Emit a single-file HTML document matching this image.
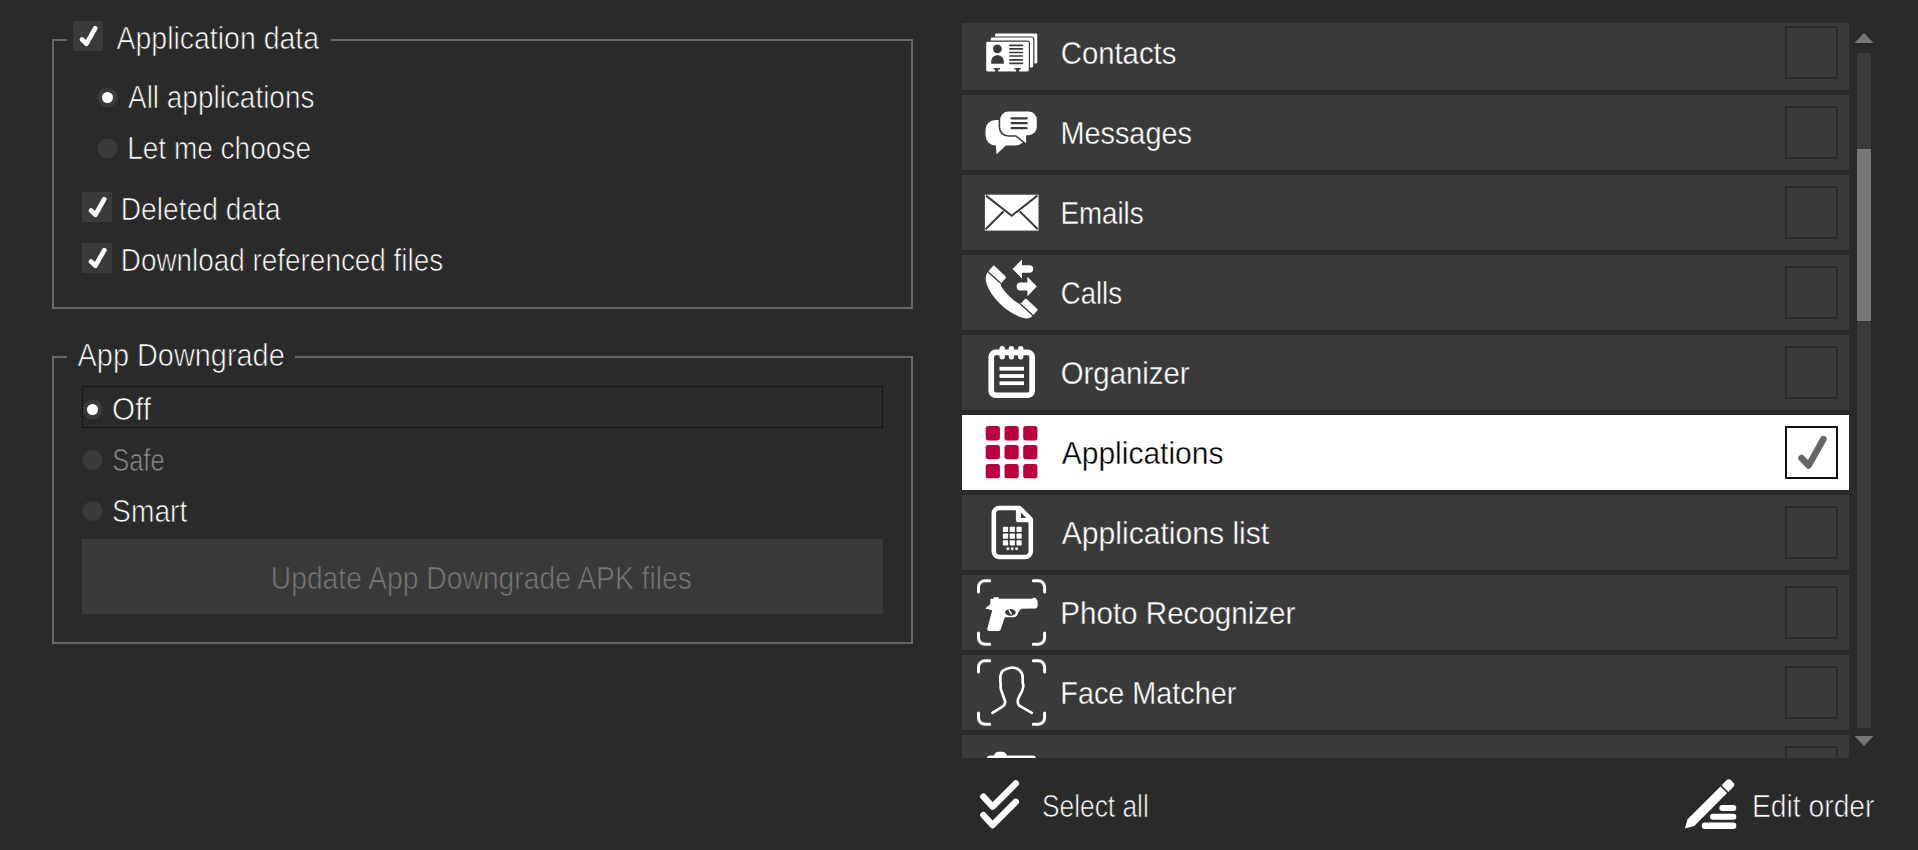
<!DOCTYPE html>
<html><head><meta charset="utf-8"><style>
html,body{margin:0;padding:0;background:#2a2a2a;width:1918px;height:850px;overflow:hidden}
svg{display:block}
text{font-family:'Liberation Sans', sans-serif;white-space:pre}
</style></head><body>
<svg width="1918" height="850" viewBox="0 0 1918 850"><rect x="0" y="0" width="1918" height="850" fill="#2a2a2a"/><path d="M67,40 H53 V308 H912 V40 H331" fill="none" stroke="#666666" stroke-width="2"/><path d="M67,357 H53 V643 H912 V357 H295" fill="none" stroke="#666666" stroke-width="2"/><rect x="73" y="21" width="30" height="30" fill="#3a3a3a"/><path d="M82,39.5 L86.5,43.7 L95.3,28.2" fill="none" stroke="#fff" stroke-width="4.7" stroke-linecap="round" stroke-linejoin="round"/><circle cx="107.5" cy="97.5" r="10" fill="#3a3a3a"/><circle cx="107.5" cy="97.5" r="5.5" fill="#fff"/><circle cx="107.5" cy="148.5" r="10" fill="#3a3a3a"/><rect x="82" y="192" width="30" height="30" fill="#3a3a3a"/><path d="M91,210.5 L95.5,214.7 L104.3,199.2" fill="none" stroke="#fff" stroke-width="4.7" stroke-linecap="round" stroke-linejoin="round"/><rect x="82" y="243" width="30" height="30" fill="#3a3a3a"/><path d="M91,261.5 L95.5,265.7 L104.3,250.2" fill="none" stroke="#fff" stroke-width="4.7" stroke-linecap="round" stroke-linejoin="round"/><circle cx="92.5" cy="409.5" r="10" fill="#3a3a3a"/><circle cx="92.5" cy="409.5" r="5.5" fill="#fff"/><circle cx="92.5" cy="460" r="10" fill="#3a3a3a"/><circle cx="92.5" cy="511" r="10" fill="#3a3a3a"/><rect x="82.5" y="386.5" width="800" height="41" fill="none" stroke="#000" stroke-width="1" stroke-dasharray="1 1" shape-rendering="crispEdges"/><rect x="82" y="539" width="801" height="75" fill="#3a3a3a"/><defs><clipPath id="lv"><rect x="962" y="23" width="887" height="735"/></clipPath></defs><g clip-path="url(#lv)"><rect x="962" y="15" width="887" height="75" fill="#3a3a3a"/><rect x="1786" y="27" width="51" height="51" fill="#3a3a3a" stroke="#2a2a2a" stroke-width="2"/><rect x="962" y="95" width="887" height="75" fill="#3a3a3a"/><rect x="1786" y="107" width="51" height="51" fill="#3a3a3a" stroke="#2a2a2a" stroke-width="2"/><rect x="962" y="175" width="887" height="75" fill="#3a3a3a"/><rect x="1786" y="187" width="51" height="51" fill="#3a3a3a" stroke="#2a2a2a" stroke-width="2"/><rect x="962" y="255" width="887" height="75" fill="#3a3a3a"/><rect x="1786" y="267" width="51" height="51" fill="#3a3a3a" stroke="#2a2a2a" stroke-width="2"/><rect x="962" y="335" width="887" height="75" fill="#3a3a3a"/><rect x="1786" y="347" width="51" height="51" fill="#3a3a3a" stroke="#2a2a2a" stroke-width="2"/><rect x="962" y="415" width="887" height="75" fill="#ffffff"/><rect x="1786" y="427" width="51" height="51" fill="#fff" stroke="#111" stroke-width="2"/><path d="M1801.5,458 L1808.6,465.5 L1823.4,439.1" fill="none" stroke="#666" stroke-width="6.5" stroke-linecap="round" stroke-linejoin="round"/><rect x="962" y="495" width="887" height="75" fill="#3a3a3a"/><rect x="1786" y="507" width="51" height="51" fill="#3a3a3a" stroke="#2a2a2a" stroke-width="2"/><rect x="962" y="575" width="887" height="75" fill="#3a3a3a"/><rect x="1786" y="587" width="51" height="51" fill="#3a3a3a" stroke="#2a2a2a" stroke-width="2"/><rect x="962" y="655" width="887" height="75" fill="#3a3a3a"/><rect x="1786" y="667" width="51" height="51" fill="#3a3a3a" stroke="#2a2a2a" stroke-width="2"/><rect x="962" y="735" width="887" height="75" fill="#3a3a3a"/><rect x="1786" y="747" width="51" height="51" fill="#3a3a3a" stroke="#2a2a2a" stroke-width="2"/></g><path d="M1854.5,43 L1873.5,43 L1864,33 Z" fill="#777"/><rect x="1857" y="53" width="14" height="675" fill="#3a3a3a"/><rect x="1857" y="149" width="14" height="172" fill="#777"/><path d="M1854.5,736 L1873.5,736 L1864,746 Z" fill="#777"/><rect x="994.4" y="32.9" width="43.500000000000114" height="31.199999999999996" rx="2" fill="#ffffff" stroke="#3a3a3a" stroke-width="1.2"/><rect x="990" y="37" width="43.799999999999955" height="31" rx="2" fill="#ffffff" stroke="#3a3a3a" stroke-width="1.2"/><rect x="985.6" y="41.2" width="43.80000000000007" height="30.799999999999997" rx="2" fill="#ffffff" stroke="#3a3a3a" stroke-width="1.2"/><circle cx="997.4" cy="48.8" r="4.4" fill="#3a3a3a"/><path d="M991.2,63.8 L991.2,61.5 C991.2,57.8 994,55.3 997.5,55.3 C1001,55.3 1003.8,57.8 1003.8,61.5 L1003.8,63.8 Z" fill="#3a3a3a"/><line x1="1009.9" y1="45.4" x2="1022.4" y2="45.4" stroke="#3a3a3a" stroke-width="1.7" stroke-linecap="round"/><line x1="1009.9" y1="48.9" x2="1022.4" y2="48.9" stroke="#3a3a3a" stroke-width="1.7" stroke-linecap="round"/><line x1="1009.9" y1="52.5" x2="1022.4" y2="52.5" stroke="#3a3a3a" stroke-width="1.7" stroke-linecap="round"/><line x1="1009.9" y1="56" x2="1022.4" y2="56" stroke="#3a3a3a" stroke-width="1.7" stroke-linecap="round"/><line x1="1009.9" y1="59.8" x2="1022.4" y2="59.8" stroke="#3a3a3a" stroke-width="1.7" stroke-linecap="round"/><line x1="1009.9" y1="63.4" x2="1022.4" y2="63.4" stroke="#3a3a3a" stroke-width="1.7" stroke-linecap="round"/><path d="M993.5,68 H1000.0 V69.6 H998.3 V72.5 H995.2 V69.6 H993.5 Z" fill="#3a3a3a"/><path d="M1014.4,68 H1020.9 V69.6 H1019.1999999999999 V72.5 H1016.1 V69.6 H1014.4 Z" fill="#3a3a3a"/><rect x="985.5" y="119.9" width="40" height="25.5" rx="10" fill="#ffffff"/><path d="M995.8,144 L996.5,154.2 L1007.5,144 Z" fill="#ffffff"/><path d="M1008.4,110.8 H1028.6 A9,9 0 0 1 1037.6,119.8 V127 A9,9 0 0 1 1028.6,136 H1026.9 V144.8 L1015.9,136 H1008.4 A9,9 0 0 1 999.4,127 V119.8 A9,9 0 0 1 1008.4,110.8 Z" fill="#ffffff" stroke="#3a3a3a" stroke-width="1.6"/><line x1="1011.6" y1="118.3" x2="1026.7" y2="118.3" stroke="#3a3a3a" stroke-width="2.3" stroke-linecap="round"/><line x1="1011.6" y1="123.2" x2="1026.7" y2="123.2" stroke="#3a3a3a" stroke-width="2.3" stroke-linecap="round"/><line x1="1011.6" y1="128.2" x2="1026.7" y2="128.2" stroke="#3a3a3a" stroke-width="2.3" stroke-linecap="round"/><rect x="984.9" y="194.7" width="53.6" height="35.9" fill="#ffffff"/><path d="M986,195.6 L1011.7,215.8 L1037.4,195.6" fill="none" stroke="#3a3a3a" stroke-width="2"/><path d="M985.6,229.2 L1003.6,211.2 M1037.8,229.2 L1019.8,211.4" fill="none" stroke="#3a3a3a" stroke-width="2"/><path d="M993.2,265.8 Q994,265.3 994.7,266 L1005.6,276.6 Q1006.3,277.4 1005.6,278.2 L1001.8,282.6 Q1000.6,284.2 1000.9,286 C1004.5,291.5 1010.5,298.5 1018.5,303.6 Q1020.3,304.2 1021.6,302.8 L1025,299 Q1025.8,298.3 1026.6,299 L1037.3,308.9 Q1038,309.7 1037.3,310.5 L1033.5,314.8 C1031.5,317.5 1028.8,318.7 1025.8,318.5 C1009,315 993,300 987,285 C985.3,281 985.2,276.5 987.3,272.5 Z" fill="#ffffff"/><path d="M987.3,271.2 L1001.3,283.8 M1020.2,303.8 L1033.2,315.7" stroke="#3a3a3a" stroke-width="1.5"/><path d="M1012.5,269 L1022,259.5 V265.3 H1029.5 A3.7,3.7 0 0 1 1029.5,272.7 H1022 V278.5 Z" fill="#ffffff"/><path d="M1036.8,286.5 L1027.4,276.8 V282.6 H1020.5 A3.9,3.9 0 0 0 1020.5,290.4 H1027.4 V296.2 Z" fill="#ffffff"/><rect x="991.25" y="352.45" width="40.9" height="42.8" rx="4.5" fill="none" stroke="#ffffff" stroke-width="5.7"/><line x1="1002.2" y1="348.8" x2="1002.2" y2="356.8" stroke="#ffffff" stroke-width="5.4" stroke-linecap="round"/><line x1="1011.35" y1="348.8" x2="1011.35" y2="356.8" stroke="#ffffff" stroke-width="5.4" stroke-linecap="round"/><line x1="1020.75" y1="348.8" x2="1020.75" y2="356.8" stroke="#ffffff" stroke-width="5.4" stroke-linecap="round"/><line x1="999.5" y1="368.7" x2="1024" y2="368.7" stroke="#ffffff" stroke-width="3.8"/><line x1="999.5" y1="376" x2="1024" y2="376" stroke="#ffffff" stroke-width="3.8"/><line x1="999.5" y1="383.2" x2="1024" y2="383.2" stroke="#ffffff" stroke-width="3.8"/><rect x="985.7" y="426.1" width="14.2" height="14.3" rx="2.6" fill="#bb0040"/><rect x="985.7" y="444.9" width="14.2" height="14.3" rx="2.6" fill="#bb0040"/><rect x="985.7" y="464" width="14.2" height="14.3" rx="2.6" fill="#bb0040"/><rect x="1004.5" y="426.1" width="14.2" height="14.3" rx="2.6" fill="#bb0040"/><rect x="1004.5" y="444.9" width="14.2" height="14.3" rx="2.6" fill="#bb0040"/><rect x="1004.5" y="464" width="14.2" height="14.3" rx="2.6" fill="#bb0040"/><rect x="1023.2" y="426.1" width="14.2" height="14.3" rx="2.6" fill="#bb0040"/><rect x="1023.2" y="444.9" width="14.2" height="14.3" rx="2.6" fill="#bb0040"/><rect x="1023.2" y="464" width="14.2" height="14.3" rx="2.6" fill="#bb0040"/><path d="M999.8,508 H1019.6 L1030.8,519.3 V551.3 A5.7,5.7 0 0 1 1025.1,557 H999.5 A5.7,5.7 0 0 1 993.8,551.3 V513.7 A5.7,5.7 0 0 1 999.5,508 Z" fill="none" stroke="#ffffff" stroke-width="4.6" stroke-linejoin="round"/><path d="M1015.9,507 L1021,507 L1033,519 L1033,522.2 L1018,522.2 Q1015.9,522.2 1015.9,520 Z" fill="#ffffff"/><path d="M1020.9,512.6 L1020.9,518 L1026.3,518 Z" fill="#3a3a3a"/><rect x="1002.9" y="526.8" width="5.2" height="5.2" rx="0.7" fill="#ffffff"/><rect x="1002.9" y="533.6" width="5.2" height="5.2" rx="0.7" fill="#ffffff"/><rect x="1002.9" y="540.3" width="5.2" height="5.2" rx="0.7" fill="#ffffff"/><rect x="1009.7" y="526.8" width="5.2" height="5.2" rx="0.7" fill="#ffffff"/><rect x="1009.7" y="533.6" width="5.2" height="5.2" rx="0.7" fill="#ffffff"/><rect x="1009.7" y="540.3" width="5.2" height="5.2" rx="0.7" fill="#ffffff"/><rect x="1016.5" y="526.8" width="5.2" height="5.2" rx="0.7" fill="#ffffff"/><rect x="1016.5" y="533.6" width="5.2" height="5.2" rx="0.7" fill="#ffffff"/><rect x="1016.5" y="540.3" width="5.2" height="5.2" rx="0.7" fill="#ffffff"/><circle cx="1007.9" cy="548.7" r="1.45" fill="#ffffff"/><circle cx="1012.2" cy="548.7" r="1.45" fill="#ffffff"/><circle cx="1016.6" cy="548.7" r="1.45" fill="#ffffff"/><path d="M978.5,592 V587.2 A6.5,6.5 0 0 1 985.0,580.7 H989.7 M1033.3,580.7 H1038.1 A6.5,6.5 0 0 1 1044.6,587.2 V592 M1044.6,633 V637.8 A6.5,6.5 0 0 1 1038.1,644.3 H1033.3 M989.7,644.3 H985.0 A6.5,6.5 0 0 1 978.5,637.8 V633" fill="none" stroke="#ffffff" stroke-width="3" stroke-linecap="round"/><path d="M978.5,672 V667.2 A6.5,6.5 0 0 1 985.0,660.7 H989.7 M1033.3,660.7 H1038.1 A6.5,6.5 0 0 1 1044.6,667.2 V672 M1044.6,713 V717.8 A6.5,6.5 0 0 1 1038.1,724.3 H1033.3 M989.7,724.3 H985.0 A6.5,6.5 0 0 1 978.5,717.8 V713" fill="none" stroke="#ffffff" stroke-width="3" stroke-linecap="round"/><path d="M990.5,598.7 L993.4,598.7 L993.8,597.3 L998.5,597.3 L999,598.7 L1032.5,598.7 L1033,597.8 L1035.5,597.8 L1036.5,599.5 Q1037.6,600 1037.6,601.5 L1037.6,605.5 Q1037.6,608.6 1034.5,608.6 L1021.5,608.8 Q1019.8,609.5 1018.6,612 L1017,615.4 Q1016,617.2 1013.5,617.2 L1006,617.2 Q1004.6,617.2 1004.3,618.5 L1000.8,629.3 Q1000.4,630.9 998.6,630.9 L989,630.9 Q987,630.9 987.3,628.8 L992.2,610.3 L985.2,608.6 L990.2,604.2 Z" fill="#ffffff"/><ellipse cx="1010.4" cy="612.3" rx="5.3" ry="3.4" fill="#3a3a3a"/><path d="M1008.8,609.3 Q1009.6,612 1011.6,614.2" fill="none" stroke="#ffffff" stroke-width="1.3"/><path d="M992.5,712.8 L1002.8,706.3 C1004.8,705 1005.5,702.5 1004.8,700.5 L1002,692.5 C1000.7,689.5 1000,687.5 1000.8,685.2 C1000.2,683 1000.3,680 1000.4,676 C1000.6,671 1005,668.5 1012,667.5 C1018,667.8 1022.5,671.5 1022.6,677 L1022.8,683.5 C1023.8,685 1023.5,687.5 1021.8,691.5 L1018,699 C1017.5,701.5 1017.5,704 1019.3,705.7 L1031.8,712.8" fill="none" stroke="#ffffff" stroke-width="2.7" stroke-linecap="round" stroke-linejoin="round"/><g clip-path="url(#lv)"><rect x="986.8" y="755.6" width="49.1" height="6" rx="3" fill="#ffffff"/><rect x="993.8" y="751.8" width="13.2" height="10" rx="5" fill="#ffffff"/></g><path d="M983.4,796.7 L992.6,806.7 L1015.8,783.4" fill="none" stroke="#ffffff" stroke-width="6.4" stroke-linecap="round" stroke-linejoin="round"/><path d="M983.4,815.1 L992.6,825.1 L1015.8,801.8" fill="none" stroke="#ffffff" stroke-width="6.4" stroke-linecap="round" stroke-linejoin="round"/><g transform="translate(1684.9,828.6) rotate(-45)"><path d="M0,0 L8.5,-4.7 H55 V4.7 H8.5 Z" fill="#ffffff"/><path d="M56.6,-4.7 H63.6 A3.2,3.2 0 0 1 66.8,-1.5 V1.5 A3.2,3.2 0 0 1 63.6,4.7 H56.6 Z" fill="#ffffff"/></g><rect x="1719.3" y="805" width="17.0" height="6.100000000000023" rx="3" fill="#ffffff"/><rect x="1710" y="813.8" width="26.299999999999955" height="6.0" rx="3" fill="#ffffff"/><rect x="1701.8" y="822.6" width="34.5" height="6.5" rx="3" fill="#ffffff"/><text x="116.5" y="49.4" font-size="30.5" textLength="202.54" lengthAdjust="spacingAndGlyphs" fill="#ffffff" stroke="#2a2a2a" stroke-width="0.7">Application data</text><text x="128.0" y="108.4" font-size="30.5" textLength="186.42" lengthAdjust="spacingAndGlyphs" fill="#ffffff" stroke="#2a2a2a" stroke-width="0.7">All applications</text><text x="127.16" y="159.4" font-size="30.5" textLength="183.83" lengthAdjust="spacingAndGlyphs" fill="#ffffff" stroke="#2a2a2a" stroke-width="0.7">Let me choose</text><text x="120.75" y="220.4" font-size="30.5" textLength="159.82" lengthAdjust="spacingAndGlyphs" fill="#ffffff" stroke="#2a2a2a" stroke-width="0.7">Deleted data</text><text x="120.77" y="271.4" font-size="30.5" textLength="322.43" lengthAdjust="spacingAndGlyphs" fill="#ffffff" stroke="#2a2a2a" stroke-width="0.7">Download referenced files</text><text x="77.6" y="366.4" font-size="30.5" textLength="207.1" lengthAdjust="spacingAndGlyphs" fill="#ffffff" stroke="#2a2a2a" stroke-width="0.7">App Downgrade</text><text x="112.02" y="420.4" font-size="30.5" textLength="39.12" lengthAdjust="spacingAndGlyphs" fill="#ffffff" stroke="#2a2a2a" stroke-width="0.7">Off</text><text x="112.16" y="471.4" font-size="30.5" textLength="52.46" lengthAdjust="spacingAndGlyphs" fill="#8a8a8a" stroke="#2a2a2a" stroke-width="0.7">Safe</text><text x="112.08" y="522.4" font-size="30.5" textLength="75.24" lengthAdjust="spacingAndGlyphs" fill="#ffffff" stroke="#2a2a2a" stroke-width="0.7">Smart</text><text x="270.75" y="589.4" font-size="30.5" textLength="421.13" lengthAdjust="spacingAndGlyphs" fill="#777777" stroke="#3a3a3a" stroke-width="0.7">Update App Downgrade APK files</text><text x="1060.74" y="64" font-size="30.5" textLength="115.62" lengthAdjust="spacingAndGlyphs" fill="#ffffff" stroke="#3a3a3a" stroke-width="0.35">Contacts</text><text x="1060.51" y="144" font-size="30.5" textLength="131.35" lengthAdjust="spacingAndGlyphs" fill="#ffffff" stroke="#3a3a3a" stroke-width="0.35">Messages</text><text x="1060.38" y="224" font-size="30.5" textLength="83.29" lengthAdjust="spacingAndGlyphs" fill="#ffffff" stroke="#3a3a3a" stroke-width="0.35">Emails</text><text x="1060.8" y="304" font-size="30.5" textLength="61.12" lengthAdjust="spacingAndGlyphs" fill="#ffffff" stroke="#3a3a3a" stroke-width="0.35">Calls</text><text x="1060.74" y="384" font-size="30.5" textLength="128.79" lengthAdjust="spacingAndGlyphs" fill="#ffffff" stroke="#3a3a3a" stroke-width="0.35">Organizer</text><text x="1061.7" y="464" font-size="30.5" textLength="161.76" lengthAdjust="spacingAndGlyphs" fill="#000000" stroke="#ffffff" stroke-width="0.35">Applications</text><text x="1061.7" y="544" font-size="30.5" textLength="207.52" lengthAdjust="spacingAndGlyphs" fill="#ffffff" stroke="#3a3a3a" stroke-width="0.35">Applications list</text><text x="1060.26" y="624" font-size="30.5" textLength="235.18" lengthAdjust="spacingAndGlyphs" fill="#ffffff" stroke="#3a3a3a" stroke-width="0.35">Photo Recognizer</text><text x="1060.31" y="704" font-size="30.5" textLength="176.13" lengthAdjust="spacingAndGlyphs" fill="#ffffff" stroke="#3a3a3a" stroke-width="0.35">Face Matcher</text><text x="1041.94" y="817.4" font-size="30.5" textLength="106.89" lengthAdjust="spacingAndGlyphs" fill="#ffffff" stroke="#2a2a2a" stroke-width="0.7">Select all</text><text x="1751.95" y="817.4" font-size="30.5" textLength="122.57" lengthAdjust="spacingAndGlyphs" fill="#ffffff" stroke="#2a2a2a" stroke-width="0.7">Edit order</text></svg>
</body></html>
